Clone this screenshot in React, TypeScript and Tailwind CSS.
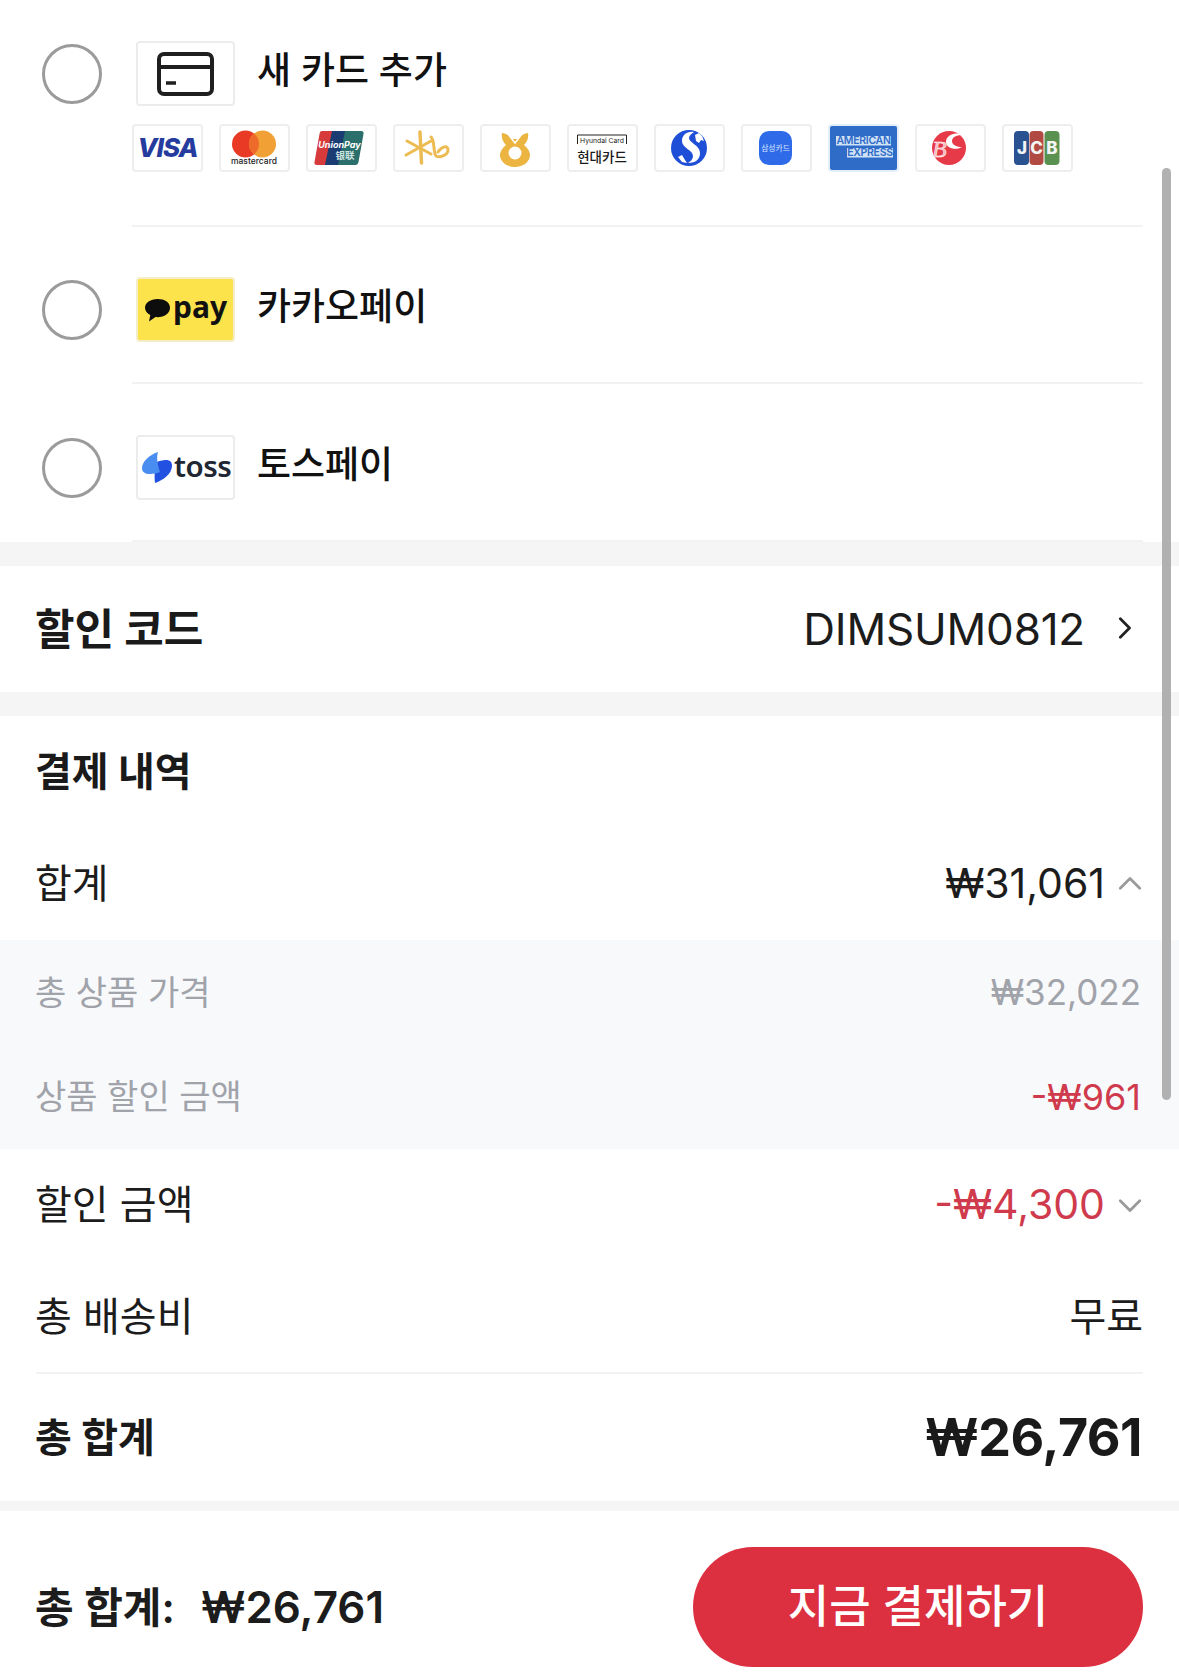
import React from 'react';

const Chevron: React.FC<{ d: string; className: string }> = ({ d, className }) => (
  <svg viewBox="0 0 24 24" fill="none" stroke="currentColor" strokeLinecap="round" strokeLinejoin="round" className={className}>
    <path d={d} />
  </svg>
);

const Radio = () => <div className="w-[60px] h-[60px] shrink-0 rounded-full border-[3px] border-[#9b9b9b]" />;

const Divider = () => <div className="ml-[132px] mr-[36px] h-[2px] bg-[#f2f2f2]" />;

const Band = ({ h = 'h-[24px]' }: { h?: string }) => <div className={`${h} bg-[#f5f5f5]`} />;

// --- Card brand chips ---
const Chip: React.FC<{ children: React.ReactNode; className?: string }> = ({ children, className = 'bg-white border-[#eeeeee]' }) => (
  <div className={`w-[71px] h-[48px] shrink-0 rounded-[4px] border-2 overflow-hidden ${className}`}>
    <svg viewBox="2 2 67 44" className="w-[67px] h-[44px] block">{children}</svg>
  </div>
);

const CARD_LOGOS: React.ReactNode[] = [
  <Chip key="visa">
    <text x="35.5" y="32.5" textAnchor="middle" fontSize="26" fontWeight="800" fontStyle="italic" fill="#253b9e" letterSpacing="-1">VISA</text>
  </Chip>,
  <Chip key="master">
    <circle cx="26.5" cy="20" r="13.5" fill="#e93a26" />
    <circle cx="43.5" cy="20" r="13.5" fill="#f1a035" />
    <path d="M35 9.5a13.5 13.5 0 0 1 0 21a13.5 13.5 0 0 1 0-21z" fill="#ee6a2a" />
    <text x="35" y="40" textAnchor="middle" fontSize="8.5" fontWeight="500" fill="#222">mastercard</text>
  </Chip>,
  <Chip key="unionpay">
    <path d="M16 7h12l-7 34H11c-2 0-3-1-2.500-3l5-28c.4-2 1-3 2.500-3z" fill="#d63a3a" />
    <path d="M26 7h15l-7 34H19z" fill="#1b3b73" />
    <path d="M39 7h16c2 0 3 1 2.500 3l-5 28c-.4 2-1.500 3-3 3H32z" fill="#2a6f6c" />
    <text x="33.500" y="24" textAnchor="middle" fontSize="9" fontWeight="700" fontStyle="italic" fill="#fff">UnionPay</text>
    <text x="39" y="35" textAnchor="middle" fontSize="9.500" fontWeight="700" fill="#cfe3e0">银联</text>
  </Chip>,
  <Chip key="kb">
    <g stroke="#ecbb52" fill="none" strokeLinecap="round">
      <path d="M27 8l1.500 31" strokeWidth="3.500" />
      <path d="M14 17l24 13" strokeWidth="3" />
      <path d="M13 31l25-14" strokeWidth="3" />
      <path d="M38 13c4 3 2 16 5 19c4 2 12-1 12-6c0-5-6-4-10 2" strokeWidth="3" />
    </g>
  </Chip>,
  <Chip key="nh">
    <path d="M22 9c3 0 7 2 10 6h6c3-4 7-6 10-6c1 5-1 9-4 12c4 3 6 7 6 10c0 7-7 12-15 12s-15-5-15-12c0-3 2-7 6-10c-3-3-5-7-4-12z" fill="#ecb441" />
    <circle cx="35" cy="29" r="6.500" fill="#fff" />
    <path d="M28 10l7 9l7-9" stroke="#fff" strokeWidth="1.500" fill="none" />
  </Chip>,
  <Chip key="hyundai">
    <path d="M10.500 20v-9h49v9" stroke="#222" strokeWidth="1" fill="none" />
    <text x="35" y="18.500" textAnchor="middle" fontSize="6.800" fill="#222">Hyundai Card</text>
    <text x="35" y="37.500" textAnchor="middle" fontSize="13.500" fontWeight="500" fill="#1a1a1a">현대카드</text>
  </Chip>,
  <Chip key="shinhan">
    <circle cx="35" cy="24" r="18" fill="#1f4fd6" />
    <path d="M40 8c-7-1-12 3-12 9c0 7 11 9 11 15c0 3-2 5-5 7c8 0 12-4 12-10c0-8-11-10-11-15c0-2 2-4 5-6z" fill="#fff" />
    <path d="M41 11l4-2l3 3l2 5l-3-1l-2 3l-3-2z" fill="#fff" />
    <path d="M24 33l4-2l3 5l2 3l-5-1z" fill="#fff" />
  </Chip>,
  <Chip key="samsung">
    <rect x="18" y="7" width="33" height="34" rx="10" fill="#2f6be8" />
    <text x="34.500" y="27" textAnchor="middle" fontSize="7.800" fill="#dbe7ff">삼성카드</text>
  </Chip>,
  <Chip key="amex" className="bg-[#2f6cc8] border-[#e3eefa]">
    <rect x="8" y="12" width="55" height="9.500" fill="#cfe2f6" />
    <rect x="19" y="24" width="46" height="9.500" fill="#cfe2f6" />
    <text x="35.500" y="20.300" textAnchor="middle" fontSize="10.500" fontWeight="600" fill="#2f6cc8" letterSpacing="-.3">AMERICAN</text>
    <text x="42" y="32.300" textAnchor="middle" fontSize="10.500" fontWeight="600" fill="#2f6cc8" letterSpacing="-.3">EXPRESS</text>
  </Chip>,
  <Chip key="bc">
    <circle cx="34" cy="24" r="17" fill="#e73a49" />
    <text x="17" y="33" fontSize="24" fontFamily="Liberation Serif" fontStyle="italic" fill="#f7b7bd" stroke="#fff" strokeWidth=".5">B</text>
    <path d="M47 11c-7-4-16 0-16 7c0 6 9 9 16 5c-5 0-10-2-10-6c0-4 5-6 10-6z" fill="#fff" />
  </Chip>,
  <Chip key="jcb">
    <rect x="12" y="7" width="15" height="34" rx="4" fill="#2a5190" />
    <rect x="27.500" y="7" width="14" height="34" rx="4" fill="#b04a42" />
    <rect x="42.500" y="7" width="15" height="34" rx="4" fill="#5a9150" />
    <g fontWeight="800" fontSize="17" fill="#f4f4f4" textAnchor="middle">
      <text x="20" y="30">J</text>
      <text x="34.500" y="30">C</text>
      <text x="50" y="30">B</text>
    </g>
  </Chip>,
];

// --- Pay method logos ---
const LogoBox: React.FC<{ children: React.ReactNode; className?: string }> = ({ children, className = 'bg-white border-[#ececec]' }) => (
  <div className={`w-[99px] h-[65px] ml-[34px] shrink-0 rounded-[4px] border-2 flex items-center ${className}`}>{children}</div>
);

const CardIcon = () => (
  <svg viewBox="0 0 57 44" fill="none" stroke="#1f1f1f" strokeWidth="4" className="w-[57px] h-[44px] mx-auto">
    <rect x="2" y="2" width="53" height="40" rx="5" />
    <path d="M2 15h53" />
    <path d="M9 31h10" strokeWidth="3.500" />
  </svg>
);

const KakaoLogo = () => (
  <div className="flex items-center pl-[7px] gap-[3px] w-full">
    <svg viewBox="0 0 25 23" className="w-[25px] h-[23px] mt-[2px]">
      <path d="M12.500 0C5.600 0 0 3.700 0 8.700c0 3.100 2.200 5.700 5.300 7.200L4 22.500l6.500-4.400c.7.100 1.300.1 2 .1c6.900 0 12.500-4.100 12.500-9.500S19.400 0 12.500 0z" fill="#0d0d0d" />
    </svg>
    <span className="font-['Noto_Sans'] text-[30px] font-bold text-[#111] leading-none -mt-[5px]">pay</span>
  </div>
);

const TossLogo = () => (
  <div className="flex items-center pl-[4px] gap-[2px] w-full">
    <svg viewBox="0 0 30 31" className="w-[30px] h-[31px] shrink-0">
      <path d="M13 31C22 28 30 21 30 14C30 10 28 8 24 8C20 8 17 9 15 10C13 15 12 24 13 31z" fill="#2250e0" />
      <path d="M16 0C7 3 0 10 0 16C0 20 3 22 8 22C12 22 16 21 18 20C16 14 14 6 16 0z" fill="#4a8df0" />
    </svg>
    <span className="font-['Noto_Sans'] text-[29.5px] font-semibold text-[#202632] leading-none -mt-[3px] tracking-[-0.5px]">toss</span>
  </div>
);

const PayRow: React.FC<{ logo: React.ReactNode; label: string; boxClass?: string; top: string }> = ({ logo, label, boxClass, top }) => (
  <div className={`flex items-center pl-[42px] ${top}`}>
    <Radio />
    <LogoBox className={boxClass}>{logo}</LogoBox>
    <span className="ml-[22px] -mt-[7px] text-[37px] font-medium text-[#111] leading-none">{label}</span>
  </div>
);

// --- Summary rows ---
const Row: React.FC<{ left: string; right?: React.ReactNode; className?: string }> = ({ left, right, className = 'h-[112px] text-[40px] text-[#1c1c1c]' }) => (
  <div className={`flex items-center justify-between pl-[35px] pr-[36px] ${className}`}>
    <span>{left}</span>
    {right}
  </div>
);

const App: React.FC = () => {
  return (
    <div className="relative w-[1179px] h-[1678px] overflow-hidden bg-white font-['Inter','Noto_Sans_CJK_KR',sans-serif]">
      {/* Payment methods */}
      <div className="h-[225px]">
        <PayRow top="pt-[41px]" logo={<CardIcon />} label="새 카드 추가" />
        <div className="flex gap-[16px] ml-[132px] mt-[18px]">{CARD_LOGOS}</div>
      </div>
      <Divider />
      <div className="h-[155px]">
        <PayRow top="pt-[50px]" logo={<KakaoLogo />} boxClass="bg-[#fce24b] border-[#f3edc8]" label="카카오페이" />
      </div>
      <Divider />
      <div className="h-[156px]">
        <PayRow top="pt-[51px]" logo={<TossLogo />} label="토스페이" />
      </div>
      <Divider />
      <Band />

      {/* Discount code */}
      <div className="flex items-center justify-between h-[126px] pl-[35px] pr-[50px]">
        <span className="text-[43px] font-bold text-[#1a1a1a]">할인 코드</span>
        <div className="flex items-center gap-[30px]">
          <span className="text-[44px] text-[#1c1c1c] tracking-[-0.2px]">DIMSUM0812</span>
          <Chevron d="M8 2l10 10l-10 10" className="w-[22px] h-[22px] -ml-[2px] -mr-[6px] -mt-[3px] text-[#222] [stroke-width:3]" />
        </div>
      </div>
      <Band />

      {/* Payment details */}
      <Row left="결제 내역" className="h-[112px] text-[40px] font-bold text-[#1a1a1a]" />
      <Row
        left="합계"
        right={
          <div className="flex items-center gap-[12px]">
            <span className="text-[41px]">₩31,061</span>
            <Chevron d="M3 16l9-9l9 9" className="w-[26px] h-[26px] text-[#9a9a9a] [stroke-width:2.6]" />
          </div>
        }
      />
      <div className="bg-[#f8f9fb]">
        <Row left="총 상품 가격" right={<span className="text-[35px] mr-[2px]">₩32,022</span>} className="h-[104px] text-[34px] text-[#a0a3aa]" />
        <Row left="상품 할인 금액" right={<span className="text-[36px] text-[#cf3a4d] mr-[2px]">-₩961</span>} className="h-[105px] text-[34px] text-[#a0a3aa]" />
      </div>
      <Row
        left="할인 금액"
        className="h-[112px] text-[40px] text-[#1c1c1c]"
        right={
          <div className="flex items-center gap-[12px]">
            <span className="text-[41px] text-[#cf3a4d]">-₩4,300</span>
            <Chevron d="M3 8l9 9l9-9" className="w-[26px] h-[26px] text-[#9a9a9a] [stroke-width:2.6]" />
          </div>
        }
      />
      <Row left="총 배송비" right={<span>무료</span>} className="h-[111px] text-[40px] text-[#1c1c1c]" />
      <div className="mx-[36px] h-[2px] bg-[#f2f2f2]" />
      <div className="flex items-center justify-between h-[127px] pl-[35px] pr-[36px] text-[#1a1a1a] font-bold">
        <span className="text-[40px]">총 합계</span>
        <span className="text-[52px] tracking-[-0.5px] mr-[1px]">₩26,761</span>
      </div>
      <Band h="h-[10px]" />

      {/* Bottom bar */}
      <div className="flex items-center justify-between h-[169px] pl-[35px] pr-[36px] pt-[29px]">
        <div className="flex items-center gap-[26px] font-semibold text-[#1c1c1c] -mt-[6px]">
          <span className="text-[42px]">총 합계:</span>
          <span className="text-[44px]">₩26,761</span>
        </div>
        <button className="w-[450px] h-[120px] rounded-full bg-[#dc2f3f] text-white text-[45px] font-medium -mt-[7px]">지금 결제하기</button>
      </div>

      {/* Scrollbar overlay */}
      <div className="absolute left-[1162px] top-[168px] w-[9px] h-[932px] rounded-full bg-[#a8a8a8]/90" />
    </div>
  );
};

export default App;
